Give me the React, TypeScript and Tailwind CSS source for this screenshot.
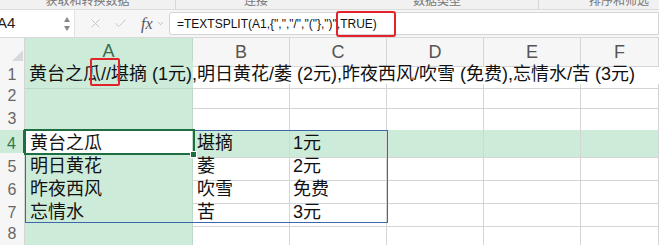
import React from 'react';
import { X, Check, ChevronDown } from 'lucide-react';

const FONT = { fontFamily: '"Liberation Sans", "Noto Sans CJK SC", sans-serif' };

const COLS = ['A', 'B', 'C', 'D', 'E', 'F'];

// spilled TEXTSPLIT result, rows 4-7
const spill = [
  ['黄台之瓜', '堪摘', '1元'],
  ['明日黄花', '萎', '2元'],
  ['昨夜西风', '吹雪', '免费'],
  ['忘情水', '苦', '3元'],
];

const RibbonStrip = () => (
  <div className="h-[10px] flex bg-[#f1f1f1] border-b border-[#dcdcdc] overflow-hidden text-[12px] leading-none text-[#777]">
    <div className="w-[176px] flex justify-center border-r border-[#d6d6d6]">
      <span className="-mt-[5px]">获取和转换数据</span>
    </div>
    <div className="w-[160px] flex justify-center">
      <span className="-mt-[5px]">连接</span>
    </div>
    <div className="w-[203px] flex justify-center border-r border-[#d6d6d6]">
      <span className="-mt-[5px]">数据类型</span>
    </div>
    <div className="flex-1 flex justify-center">
      <span className="-mt-[5px] ml-[40px]">排序和筛选</span>
    </div>
  </div>
);

const FormulaBar = () => (
  <div className="h-[28px] flex items-center bg-[#f6f6f6] border-b border-[#d9d9d9]">
    <div className="w-[75px] h-full flex items-center bg-white border-r border-[#e2e2e2] relative">
      <span className="text-[15px] text-[#222] -ml-[3px]">A4</span>
      <div className="ml-auto mr-[4px] flex flex-col items-center gap-[4px]">
        <div className="w-0 h-0 border-l-[3px] border-r-[3px] border-b-[5px] border-l-transparent border-r-transparent border-b-[#888]" />
        <div className="w-0 h-0 border-l-[3px] border-r-[3px] border-t-[5px] border-l-transparent border-r-transparent border-t-[#888]" />
      </div>
    </div>
    <div className="w-[94px] h-full flex items-center">
      <X size={15} strokeWidth={1.5} className="ml-[13px] text-[#c4c4c4]" />
      <Check size={15} strokeWidth={1.5} className="ml-[10px] text-[#c4c4c4]" />
      <span className="ml-[13px] text-[16px] italic text-[#555]" style={{ fontFamily: '"Liberation Serif", serif' }}>
        fx
      </span>
      <ChevronDown size={9} strokeWidth={1.5} className="ml-[3px] text-[#999]" />
    </div>
    <div className="flex-1 h-[23px] flex items-center bg-white border border-[#d4d4d4] rounded-l-[3px] pl-[7px] text-[12px] text-[#111] whitespace-nowrap overflow-hidden">
      {'=TEXTSPLIT(A1,{",","/","("},")"'}
      <span>,TRUE)</span>
    </div>
  </div>
);

const App: React.FC = () => {
  const grid = 'grid grid-cols-[25px_168px_97px_97px_97px_97px_78px]';
  const line = 'border-r border-b border-[#d5d5d5]';
  const green = 'bg-[#cdebd9]';

  return (
    <div className="relative w-[659px] h-[245px] overflow-hidden bg-white" style={FONT}>
      <RibbonStrip />
      <FormulaBar />

      {/* column headers */}
      <div className={`${grid} h-[23px]`}>
        <div className={`${line} bg-[#f6f6f6] flex items-end justify-end`}>
          <div className="w-0 h-0 mb-[3px] mr-[1px] border-l-[13px] border-b-[13px] border-l-transparent border-b-[#d8d8d8]" />
        </div>
        {COLS.map((c) => (
          <div
            key={c}
            className={
              c === 'A'
                ? `${green} border-r border-[#bcd8c6] border-b-2 border-b-[#1f7144] flex items-center justify-center text-[18px] text-[#3b6b4f]`
                : `${line} bg-[#f6f6f6] flex items-center justify-center text-[18px] text-[#555]`
            }
          >
            {c}
          </div>
        ))}
      </div>

      {/* row 1 with overflowing text */}
      <div className={`${grid} h-[23px]`}>
        <div className={`${line} bg-[#f6f6f6] flex items-center justify-center text-[16px] text-[#666]`}>1</div>
        <div className={`border-b border-[#bcd8c6] ${green} relative z-10 pl-[4px] flex items-center whitespace-nowrap text-[18px] text-[#111]`}>
          黄台之瓜//堪摘 (1元),明日黄花/萎 (2元),昨夜西风/吹雪 (免费),忘情水/苦 (3元)
        </div>
        <div className="border-b border-[#d5d5d5]" />
        <div className="border-b border-[#d5d5d5]" />
        <div className="border-b border-[#d5d5d5]" />
        <div className="border-b border-[#d5d5d5]" />
        <div className="border-b border-[#d5d5d5]" />
      </div>

      {[2, 3].map((n) => (
        <div key={n} className={`${grid} h-[23px]`}>
          <div className={`${line} bg-[#f6f6f6] flex items-center justify-center text-[16px] text-[#666]`}>{n}</div>
          <div className={`border-r border-b border-[#bcd8c6] ${green}`} />
          {[0, 1, 2, 3, 4].map((i) => (
            <div key={i} className={line} />
          ))}
        </div>
      ))}

      {spill.map((r, idx) => {
        const n = idx + 4;
        const sel = n === 4;
        return (
          <div key={n} className={`${grid} h-[23px]`}>
            <div
              className={
                sel
                  ? `${green} border-b border-[#bcd8c6] border-r-2 border-r-[#1f7144] flex items-center justify-center text-[16px] text-[#2c7a4d]`
                  : `${line} bg-[#f6f6f6] flex items-center justify-center text-[16px] text-[#666]`
              }
            >
              {n}
            </div>
            <div
              className={`${sel ? 'bg-white' : green} border-r border-b border-[#bcd8c6] pl-[5px] flex items-center text-[18px] text-[#111]`}
            >
              {r[0]}
            </div>
            <div className={`${sel ? green : ''} ${line} ${sel ? 'border-[#bcd8c6]' : ''} pl-[4px] flex items-center text-[18px] text-[#111]`}>
              {r[1]}
            </div>
            <div className={`${sel ? green : ''} ${line} ${sel ? 'border-[#bcd8c6]' : ''} pl-[3px] flex items-center text-[18px] text-[#111]`}>
              {r[2]}
            </div>
            {[0, 1, 2].map((i) => (
              <div key={i} className={`${sel ? `${green} border-[#bcd8c6]` : ''} ${line}`} />
            ))}
          </div>
        );
      })}

      <div className={`${grid} h-[23px]`}>
        <div className={`${line} bg-[#f6f6f6] flex items-center justify-center text-[16px] text-[#666]`}>8</div>
        <div className={`border-r border-b border-[#bcd8c6] ${green}`} />
        {[0, 1, 2, 3, 4].map((i) => (
          <div key={i} className={line} />
        ))}
      </div>

      {/* spill range outline A4:C7 */}
      <div className="absolute left-[25px] top-[130px] w-[363px] h-[93px] border border-[#3d66ab] pointer-events-none" />
      {/* active cell A4 */}
      <div className="absolute left-[24px] top-[129px] w-[171px] h-[26px] border-2 border-[#1f6e42] pointer-events-none" />
      <div className="absolute left-[190px] top-[151px] w-[7px] h-[7px] bg-[#1f6e42] border border-white" />

      {/* red annotation boxes */}
      <div className="absolute left-[336px] top-[11px] w-[60px] h-[26px] border-2 border-[#e3232a] rounded-[3px]" />
      <div className="absolute left-[90px] top-[58px] w-[30px] h-[28px] border-2 border-[#e3232a] rounded-[2px] z-20" />
    </div>
  );
};

export default App;
